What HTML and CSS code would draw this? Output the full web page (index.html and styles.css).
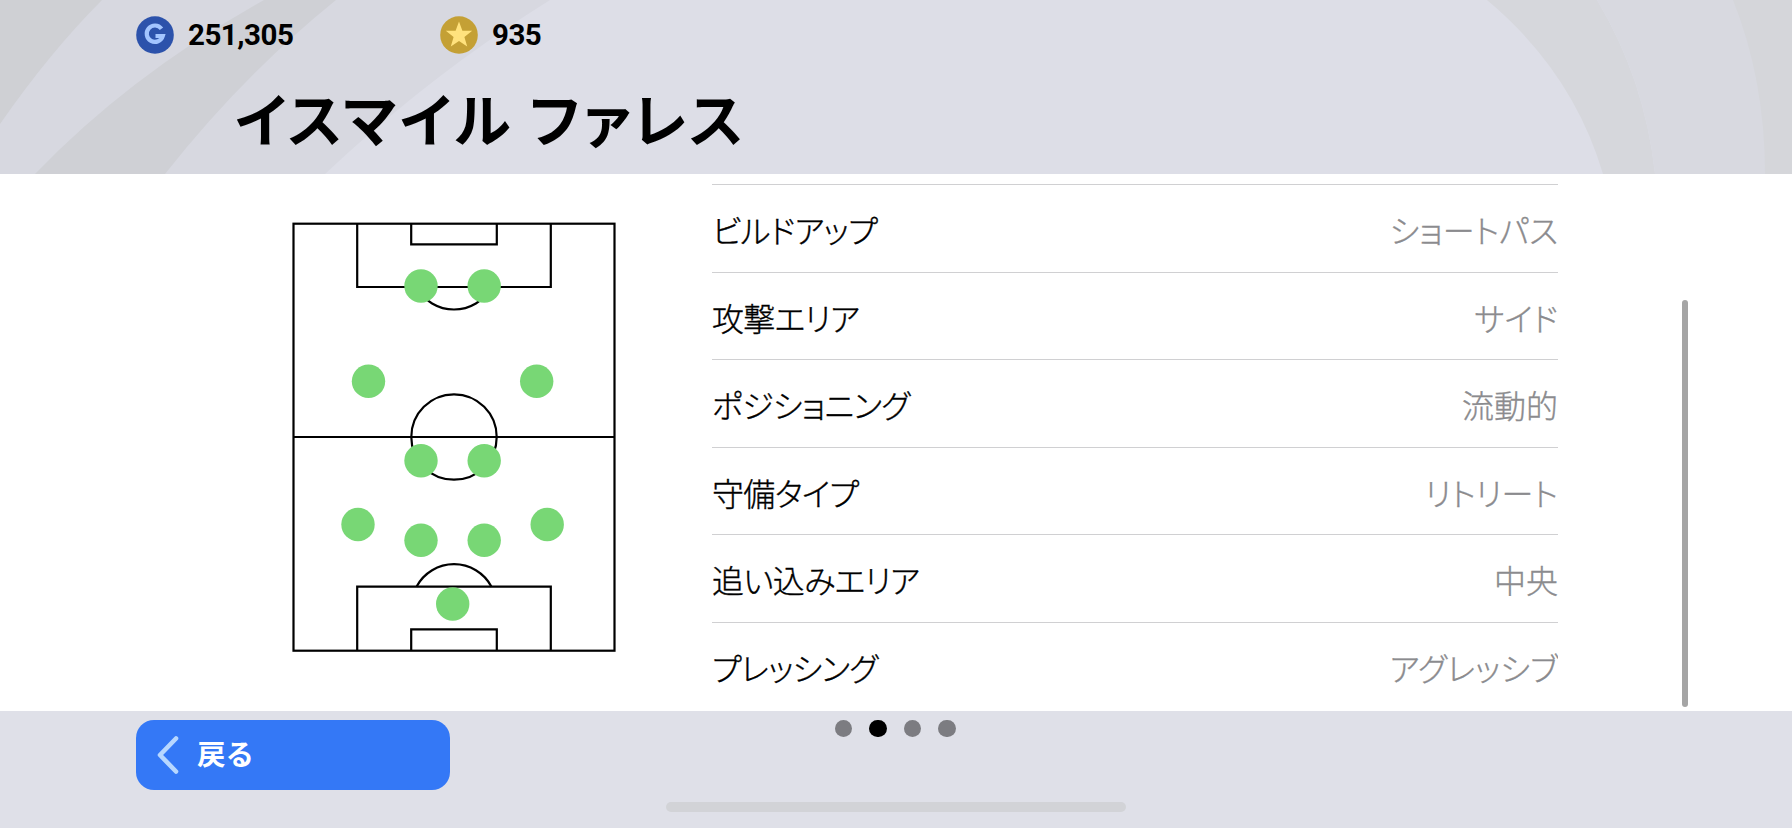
FILE: index.html
```
<!DOCTYPE html>
<html lang="ja">
<head>
  <meta charset="UTF-8">
  <meta name="viewport" content="width=device-width, initial-scale=1.0">
  <title>イスマイル ファレス</title>
  <link rel="stylesheet" href="styles.css">
</head>
<body>

  <header class="header">
    <svg class="header-bg" viewBox="0 0 1792 174" preserveAspectRatio="none">
      <path fill="#d7d8e0" d="M0 0H550Q430 75 325 174H0Z"/>
      <path fill="#cfd0d4" d="M0 0H102Q50 52 0 124Z"/>
      <path fill="#cfd0d5" d="M264 0H336Q242 76 165 174H35Q130 75 264 0Z"/>
      <path fill="#d6d7dc" d="M1487 0Q1573 72 1603 174H1655Q1645 80 1597 0Z"/>
      <path fill="#d8d9e0" d="M1597 0Q1645 80 1655 174H1792V0Z"/>
      <path fill="#d5d6da" d="M1733 0Q1765 80 1765 174H1792V0Z"/>
    </svg>
    <div class="coins">
      <div class="coin">
        <svg class="coin-icon" viewBox="0 0 38 38">
          <circle cx="19" cy="19" r="18.8" fill="#2c52ab"/>
          <path d="M25.5 12.8A8.2 8.2 0 1 0 26.8 20H19.5" fill="none" stroke="#a3c5ff" stroke-width="4.2"/>
        </svg>
        <span>251,305</span>
      </div>
      <div class="coin">
        <svg class="coin-icon" viewBox="0 0 38 38">
          <circle cx="19" cy="19" r="18.8" fill="#c4a035"/>
          <path d="M19 5.5L22.4 14.8H32.2L24.4 20.9L27.2 30.5L19 24.9L10.8 30.5L13.6 20.9L5.8 14.8H15.6Z" fill="#ffe27d"/>
        </svg>
        <span>935</span>
      </div>
    </div>
    <h1>イスマイル ファレス</h1>
  </header>

  <main>
    <svg class="pitch" viewBox="0 0 324 430">
      <g class="lines">
        <rect x="1.5" y="1.7" width="321" height="427"/>
        <path d="M1.5 215H322.5"/>
        <circle cx="162" cy="215" r="42.7"/>
        <path d="M65.2 1.7V65H258.8V1.7M119.200 1.7V22.3H204.8V1.7"/>
        <path d="M65.2 428.7V364.7H258.8V428.7M119.2 428.7V407.3H204.8V428.7"/>
        <path d="M124.5 65A42.5 42.5 0 0 0 199.5 65M124.5 364.7A42.5 42.5 0 0 1 199.5 364.7"/>
      </g>
      <g class="players">
        <circle cx="129" cy="64" r="16.7"/>
        <circle cx="192.2" cy="64" r="16.7"/>
        <circle cx="76.5" cy="159.3" r="16.7"/>
        <circle cx="244.7" cy="159.3" r="16.7"/>
        <circle cx="129" cy="238.7" r="16.7"/>
        <circle cx="192.2" cy="238.7" r="16.7"/>
        <circle cx="66" cy="302.5" r="16.7"/>
        <circle cx="255.2" cy="302.5" r="16.7"/>
        <circle cx="129" cy="318.3" r="16.7"/>
        <circle cx="192.2" cy="318.3" r="16.7"/>
        <circle cx="160.7" cy="382" r="16.7"/>
      </g>
    </svg>

    <dl class="tactics">
      <div class="row"><dt>ビルドアップ</dt><dd>ショートパス</dd></div>
      <div class="row"><dt>攻撃エリア</dt><dd>サイド</dd></div>
      <div class="row"><dt>ポジショニング</dt><dd>流動的</dd></div>
      <div class="row"><dt>守備タイプ</dt><dd>リトリート</dd></div>
      <div class="row"><dt>追い込みエリア</dt><dd>中央</dd></div>
      <div class="row"><dt>プレッシング</dt><dd>アグレッシブ</dd></div>
    </dl>

    <div class="scrollbar"></div>
  </main>

  <footer>
    <button class="back">
      <svg class="chevron" viewBox="0 0 22 38"><path d="M19 2.5L3 19L19 35.5"/></svg>
      <span>戻る</span>
    </button>
    <div class="dots">
      <i></i><i class="active"></i><i></i><i></i>
    </div>
    <div class="home-bar"></div>
  </footer>

</body>
</html>
```
FILE: styles.css
```
* {
  box-sizing: border-box;
  margin: 0;
  padding: 0;
}

body {
  width: 1792px;
  height: 828px;
  overflow: hidden;
  display: flex;
  flex-direction: column;
  background: #fff;
  color: #000;
  font-family: "Noto Sans CJK JP", sans-serif;
  font-feature-settings: "palt";
}

/* header */
.header {
  position: relative;
  height: 174px;
  flex: none;
  background: #dddee7;
}

.header-bg {
  position: absolute;
  inset: 0;
  width: 100%;
  height: 100%;
}

.coins {
  position: relative;
  display: flex;
  padding: 15px 0 0 136px;
}

.coin {
  display: flex;
  align-items: center;
  gap: 14px;
  width: 304px;
  height: 39px;
  font: bold 29.5px Roboto, sans-serif;
  letter-spacing: -0.5px;
}

.coin-icon {
  width: 38px;
  height: 38px;
}

h1 {
  position: relative;
  padding: 23px 0 0 235px;
  font-size: 58px;
  line-height: 80px;
  font-weight: bold;
  letter-spacing: 2.6px;
  white-space: nowrap;
}

/* content */
main {
  height: 537px;
  flex: none;
  display: flex;
  align-items: flex-start;
}

.pitch {
  width: 324px;
  height: 430px;
  margin: 48.3px 0 0 292px;
  flex: none;
}

.lines {
  fill: none;
  stroke: #000;
  stroke-width: 2.2;
}

.players {
  fill: #78d775;
}

.tactics {
  width: 846px;
  height: 527px;
  margin: 10px 0 0 96px;
  overflow: hidden;
}

.row {
  display: flex;
  justify-content: space-between;
  height: 87.5px;
  padding-top: 20px;
  border-top: 1.5px solid #d0d0d2;
  font-size: 32px;
  line-height: 48px;
  font-weight: 300;
  -webkit-text-stroke: 0.35px;
}

.row dt {
  letter-spacing: -0.7px;
}

.row dd {
  color: #8b8b8e;
}

.scrollbar {
  width: 5.5px;
  height: 407px;
  margin: 125.5px 0 0 124px;
  border-radius: 3px;
  background: #a5a5a5;
}

/* footer */
footer {
  flex: 1;
  display: grid;
  grid-template-columns: 666px 460px 1fr;
  grid-template-rows: 91px auto;
  background: #dfe0e8;
}

.back {
  display: flex;
  align-items: center;
  gap: 18px;
  width: 314px;
  height: 70px;
  margin: 8.5px 0 0 136px;
  padding-left: 21px;
  border: none;
  border-radius: 18px;
  background: #3478f6;
  color: #fff;
  font: bold 28.5px/40px "Noto Sans CJK JP", sans-serif;
}

.back span {
  padding-bottom: 4px;
}

.chevron {
  width: 22px;
  height: 38px;
  fill: none;
  stroke: #b7d7ff;
  stroke-width: 4.6;
  stroke-linecap: round;
  stroke-linejoin: round;
}

.dots {
  display: flex;
  justify-content: center;
  gap: 17px;
  padding: 8.5px 1.5px 0 0;
}

.dots i {
  width: 17.5px;
  height: 17.5px;
  border-radius: 50%;
  background: #7c7c81;
}

.dots .active {
  background: #000;
}

.home-bar {
  grid-column: 2;
  height: 10px;
  border-radius: 5px;
  background: #d2d3d7;
}
```
